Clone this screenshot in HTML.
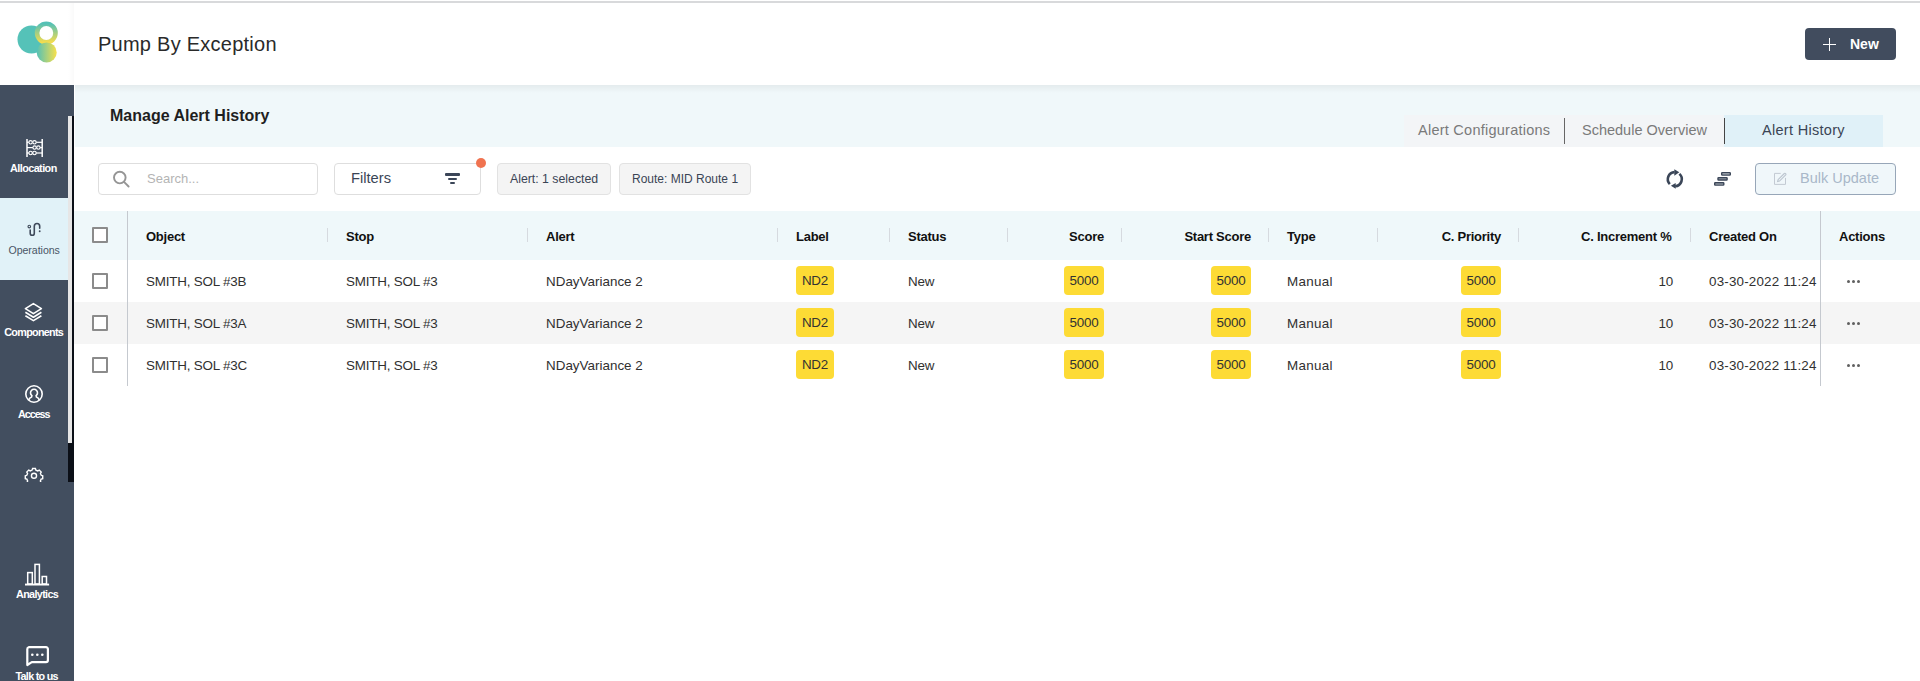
<!DOCTYPE html>
<html>
<head>
<meta charset="utf-8">
<style>
*{box-sizing:border-box;margin:0;padding:0}
html,body{width:1920px;height:681px;overflow:hidden;background:#fff;font-family:"Liberation Sans",sans-serif;position:relative}
.a{position:absolute}
.t{position:absolute;white-space:nowrap;line-height:1}
.topline{left:0;top:1px;width:1920px;height:2px;background:#d8d9db}
.logoarea{left:0;top:3px;width:74px;height:82px;background:#fff}
.logoshadow{left:68px;top:3px;width:6px;height:82px;background:linear-gradient(to right,rgba(0,0,0,0),rgba(0,0,0,0.025))}
.side{left:0;top:85px;width:74px;height:596px;background:#424e5f}
.band{left:75px;top:85px;width:1845px;height:62px;background:#f0f8fa}
.bandshadow{left:75px;top:85px;width:1845px;height:8px;background:linear-gradient(to bottom,rgba(0,0,0,0.05),rgba(0,0,0,0))}
.navw{color:#fff;font-weight:bold;font-size:10px}
.box{border:1px solid #dedede;border-radius:4px;background:#fff}
.chip{border:1px solid #e2e2e2;border-radius:4px;background:#f4f4f4}
.thead{left:74px;top:211px;width:1846px;height:49px;background:#eff8fa}
.sep{position:absolute;top:228px;width:1px;height:14px;background:#d6dadf}
.hd{position:absolute;white-space:nowrap;line-height:1;font-weight:bold;font-size:13px;color:#111;letter-spacing:-0.25px}
.cell{position:absolute;white-space:nowrap;line-height:1;font-size:13.4px;color:#303030;letter-spacing:-0.2px}
.badge{position:absolute;height:29px;background:#fddb35;border-radius:4px;font-size:13.4px;line-height:29px;text-align:center;color:#333;letter-spacing:-0.2px}
.cb{position:absolute;left:92px;width:16px;height:16px;border:2px solid #8b8b8b;border-radius:1px;background:#fff}
.row{position:absolute;left:74px;width:1846px;height:42px}
.dots{position:absolute;width:14px;height:4px}
.dots i{position:absolute;top:0.3px;width:3.2px;height:3.2px;border-radius:50%;background:#606060}
</style>
</head>
<body>
<div class="a topline"></div>
<div class="a logoshadow"></div>
<!-- logo -->
<svg class="a" style="left:0;top:0" width="74" height="85" viewBox="0 0 74 85">
  <defs>
    <linearGradient id="gring" x1="0" y1="0" x2="0" y2="1">
      <stop offset="0" stop-color="#55c1b6"/>
      <stop offset="1" stop-color="#f4dc4e"/>
    </linearGradient>
    <linearGradient id="gbot" x1="0" y1="0" x2="1" y2="0">
      <stop offset="0" stop-color="#55c1b6"/>
      <stop offset="1" stop-color="#f8e04a"/>
    </linearGradient>
  </defs>
  <circle cx="31.5" cy="39.5" r="14" fill="#55c2b8"/>
  <circle cx="46.3" cy="33" r="9.2" fill="#fff" stroke="url(#gring)" stroke-width="4.6"/>
  <circle cx="46.7" cy="52.4" r="10" fill="url(#gbot)"/>
</svg>

<div class="t" style="left:98px;top:34px;font-size:20px;color:#2a2a2a;letter-spacing:0.25px">Pump By Exception</div>

<!-- New button -->
<div class="a" style="left:1805px;top:28px;width:91px;height:32px;background:#414c5e;border-radius:4px"></div>
<div class="a" style="left:1823px;top:43.5px;width:13px;height:1.6px;background:#fff"></div>
<div class="a" style="left:1828.7px;top:38px;width:1.6px;height:12.5px;background:#fff"></div>
<div class="t" style="left:1850px;top:37px;font-size:14px;font-weight:bold;color:#fff">New</div>

<!-- sidebar -->
<div class="a side"></div>
<div class="a" style="left:0;top:198px;width:68px;height:82px;background:#e1f2f8"></div>
<!-- scrollbar -->
<div class="a" style="left:68px;top:116px;width:4px;height:327px;background:#e6e6e6"></div>
<div class="a" style="left:72px;top:116px;width:2px;height:366px;background:#0b0f17"></div>
<div class="a" style="left:68px;top:443px;width:6px;height:39px;background:#0b0f17"></div>


<!-- sidebar nav -->
<div class="a" style="left:0;top:116px;width:68px;height:366px;overflow:hidden">
<svg class="a" style="left:0;top:-116px" width="68" height="482" viewBox="0 0 68 482">
  <g fill="none" stroke="#fff" stroke-width="1.5">
    <line x1="27" y1="139" x2="27" y2="157"/>
    <line x1="42.2" y1="139" x2="42.2" y2="157"/>
    <line x1="27" y1="142.3" x2="42.2" y2="142.3" stroke-width="1.2"/>
    <line x1="27" y1="147.6" x2="42.2" y2="147.6" stroke-width="1.2"/>
    <line x1="27" y1="153" x2="42.2" y2="153" stroke-width="1.2"/>
  </g>
  <g fill="#424e5f" stroke="#fff" stroke-width="1.1">
    <circle cx="30.6" cy="142.3" r="1.7"/><circle cx="34.5" cy="142.3" r="1.7"/>
    <circle cx="34.6" cy="147.6" r="1.7"/><circle cx="38.4" cy="147.6" r="1.7"/>
    <circle cx="30.6" cy="153" r="1.7"/><circle cx="34.5" cy="153" r="1.7"/>
  </g>
  <!-- operations icon -->
  <g fill="none" stroke="#3f4a5b" stroke-width="1.7" stroke-linecap="round">
    <circle cx="29.3" cy="226.6" r="1.3" stroke-width="1.1"/>
    <path d="M30.2 230 V233.2 A2.05 2.05 0 0 0 34.3 233.2 V226.2 A2.7 2.7 0 0 1 39.7 226.2 V228.2" stroke-width="1.6"/>
  </g>
  <circle cx="39.7" cy="231.3" r="0.95" fill="#3f4a5b"/>
  <!-- components -->
  <g fill="none" stroke="#fff" stroke-width="1.6" stroke-linejoin="round">
    <path d="M33.4 303.6 L41.4 308.6 L33.4 313.6 L25.4 308.6 Z"/>
    <path d="M25.4 312.3 L33.4 317.2 L41.4 312.3"/>
    <path d="M25.4 315.8 L33.4 320.6 L41.4 315.8"/>
  </g>
  <!-- access -->
  <g fill="none" stroke="#fff" stroke-width="1.6">
    <circle cx="34" cy="394" r="8.2"/>
    <path d="M28.6 400.2 Q29.2 397.6 31.6 396.9 L31.9 395.6 A3.5 3.5 0 1 1 36.1 395.6 L36.4 396.9 Q38.8 397.6 39.4 400.2"/>
  </g>
  <!-- gear -->
  <g fill="none" stroke="#fff" stroke-width="1.6" transform="translate(34 476) scale(0.88) translate(-34 -476)">
    <circle cx="34" cy="475.7" r="2.9"/>
    <path d="M32.4 467.5 L35.6 467.5 L36.2 469.3 L38.3 470.2 L40 469.3 L42.2 471.5 L41.3 473.2 L42.2 475.2 L43.9 475.8 L43.9 479 L42.1 479.6 L41.2 481.6 L42 483.4 L39.8 485.6 L38 484.7 L36 485.6 L35.4 487.4 L32.6 487.4 L32 485.6 L30 484.7 L28.2 485.6 L26 483.4 L26.8 481.6 L25.9 479.6 L24.1 479 L24.1 475.8 L25.8 475.2 L26.7 473.2 L25.8 471.5 L28 469.3 L29.8 470.2 L31.8 469.3 Z"/>
  </g>
</svg>
</div>
<div class="t navw" style="left:10px;top:162.5px;font-size:10.8px;letter-spacing:-0.55px">Allocation</div>
<div class="t" style="left:8.5px;top:244.5px;font-size:10.6px;color:#4a5566;letter-spacing:-0.05px">Operations</div>
<div class="t navw" style="left:4.3px;top:326.5px;font-size:10.8px;letter-spacing:-0.72px">Components</div>
<div class="t navw" style="left:18px;top:408.5px;font-size:10.8px;letter-spacing:-1.05px">Access</div>
<svg class="a" style="left:0;top:540px" width="74" height="141" viewBox="0 540 74 141">
  <g fill="none" stroke="#fff" stroke-width="1.5">
    <rect x="27.7" y="572.6" width="4.6" height="11.4"/>
    <rect x="35" y="564.4" width="4.4" height="19.6"/>
    <rect x="42.2" y="576.5" width="4.3" height="7.5"/>
  </g>
  <rect x="25" y="583.6" width="24.1" height="1.9" fill="#fff"/>
  <path d="M28.7 647.2 H46 A1.9 1.9 0 0 1 47.9 649.1 V660.2 A1.9 1.9 0 0 1 46 662.1 H31.8 L27.3 665 V649.1 A1.9 1.9 0 0 1 28.7 647.2 Z" fill="none" stroke="#fff" stroke-width="2.2" stroke-linejoin="round"/>
  <circle cx="32.3" cy="654.7" r="1.3" fill="#fff"/>
  <circle cx="37.3" cy="654.7" r="1.3" fill="#fff"/>
  <circle cx="42.3" cy="654.7" r="1.3" fill="#fff"/>
</svg>
<div class="t navw" style="left:16px;top:588.5px;font-size:10.8px;letter-spacing:-0.65px">Analytics</div>
<div class="t navw" style="left:15.5px;top:670.5px;font-size:10.8px;letter-spacing:-0.72px">Talk to us</div>

<!-- band -->
<div class="a band"></div>
<div class="a bandshadow"></div>
<div class="t" style="left:110px;top:108px;font-size:16px;font-weight:bold;color:#1f1f1f">Manage Alert History</div>

<!-- tabs -->
<div class="a" style="left:1404px;top:115px;width:320px;height:32px;background:#f3f5f7"></div>
<div class="a" style="left:1724px;top:115px;width:159px;height:32px;background:#e0f1f8"></div>
<div class="a" style="left:1564px;top:118px;width:1px;height:26px;background:#666"></div>
<div class="a" style="left:1724px;top:118px;width:1px;height:26px;background:#444"></div>
<div class="t" style="left:1418px;top:123px;font-size:14.5px;color:#7a7a7a;letter-spacing:0.25px">Alert Configurations</div>
<div class="t" style="left:1582px;top:123px;font-size:14.5px;color:#7a7a7a">Schedule Overview</div>
<div class="t" style="left:1762px;top:123px;font-size:14.5px;color:#3a4454;letter-spacing:0.3px">Alert History</div>

<!-- toolbar -->
<div class="a box" style="left:98px;top:163px;width:220px;height:32px"></div>
<svg class="a" style="left:110px;top:168px" width="24" height="24" viewBox="0 0 24 24">
  <circle cx="9.8" cy="9.6" r="5.8" fill="none" stroke="#959595" stroke-width="1.9"/>
  <line x1="14" y1="13.9" x2="18.6" y2="18.5" stroke="#959595" stroke-width="1.9" stroke-linecap="round"/>
</svg>
<div class="t" style="left:147px;top:172px;font-size:13px;color:#b4b4b4">Search...</div>

<div class="a box" style="left:334px;top:163px;width:147px;height:32px"></div>
<div class="t" style="left:351px;top:171px;font-size:14.7px;color:#3a4556">Filters</div>
<div class="a" style="left:445px;top:173px;width:15px;height:2.5px;background:#3b4658;border-radius:1px"></div>
<div class="a" style="left:447.5px;top:177.6px;width:9.8px;height:2.4px;background:#3b4658;border-radius:1px"></div>
<div class="a" style="left:450px;top:181.9px;width:5px;height:2.3px;background:#3b4658;border-radius:1px"></div>
<div class="a" style="left:476px;top:158px;width:10px;height:10px;border-radius:50%;background:#f07350"></div>

<div class="a chip" style="left:497px;top:163px;width:114px;height:32px"></div>
<div class="t" style="left:510px;top:173px;font-size:12.3px;color:#3a4454">Alert: 1 selected</div>
<div class="a chip" style="left:619px;top:163px;width:132px;height:32px"></div>
<div class="t" style="left:632px;top:173px;font-size:12px;color:#3a4454">Route: MID Route 1</div>

<!-- refresh icon -->
<svg class="a" style="left:1663px;top:167px" width="24" height="24" viewBox="0 0 24 24">
  <path d="M11.6 5.1 A7.1 7.1 0 0 0 6.8 17.1" fill="none" stroke="#3b4658" stroke-width="2.6"/>
  <path d="M16.4 6.9 A7.1 7.1 0 0 1 12.2 19.3" fill="none" stroke="#3b4658" stroke-width="2.6"/>
  <path d="M11.3 2.2 L16.3 5.2 L11.3 8.8 Z" fill="#3b4658"/>
  <path d="M12.7 16.1 L7.9 18.8 L12.7 21.8 Z" fill="#3b4658"/>
</svg>
<!-- bars icon -->
<svg class="a" style="left:1712px;top:171px" width="22" height="17" viewBox="0 0 22 17">
  <g fill="#b0b6bd" stroke="#3b4658" stroke-width="1.4">
  <rect x="9.7" y="1.6" width="8.6" height="2.5" rx="0.6"/>
  <rect x="6" y="6.7" width="9.1" height="2.3" rx="0.6"/>
  <rect x="2.7" y="11.7" width="9.1" height="2.4" rx="0.6"/>
  </g>
</svg>
<!-- bulk update -->
<div class="a" style="left:1755px;top:163px;width:141px;height:32px;border:1.3px solid #97a6b8;border-radius:4px;background:#f0f7fa"></div>
<svg class="a" style="left:1772px;top:171px" width="16" height="16" viewBox="0 0 16 16">
  <path d="M8.7 2.4 H2.5 V13.4 H13.5 V6.9" fill="none" stroke="#c3cad3" stroke-width="1"/>
  <path d="M6.1 8.7 L12.3 2.5 A1 1 0 0 1 13.7 3.9 L7.5 10.1 L5.6 10.6 Z" fill="none" stroke="#bcc5cf" stroke-width="1.1"/>
</svg>
<div class="t" style="left:1800px;top:171px;font-size:14.5px;color:#a9b8c9">Bulk Update</div>

<!-- table header -->
<div class="a thead"></div>
<div class="a" style="left:127px;top:211px;width:1px;height:175px;background:#c5c9cf"></div>
<div class="a" style="left:1820px;top:211px;width:1px;height:175px;background:#c5c9cf"></div>
<div class="cb" style="top:227px"></div>
<div class="sep" style="left:327px"></div>
<div class="sep" style="left:527px"></div>
<div class="sep" style="left:777px"></div>
<div class="sep" style="left:889px"></div>
<div class="sep" style="left:1007px"></div>
<div class="sep" style="left:1121px"></div>
<div class="sep" style="left:1268px"></div>
<div class="sep" style="left:1377px"></div>
<div class="sep" style="left:1518px"></div>
<div class="sep" style="left:1690px"></div>

<div class="hd" style="left:146px;top:230px">Object</div>
<div class="hd" style="left:346px;top:230px">Stop</div>
<div class="hd" style="left:546px;top:230px">Alert</div>
<div class="hd" style="left:796px;top:230px">Label</div>
<div class="hd" style="left:908px;top:230px">Status</div>
<div class="hd" style="left:1004px;top:230px;width:100px;text-align:right">Score</div>
<div class="hd" style="left:1151px;top:230px;width:100px;text-align:right">Start Score</div>
<div class="hd" style="left:1287px;top:230px">Type</div>
<div class="hd" style="left:1401px;top:230px;width:100px;text-align:right">C. Priority</div>
<div class="hd" style="left:1551.5px;top:230px;width:120px;text-align:right">C. Increment %</div>
<div class="hd" style="left:1709px;top:230px">Created On</div>
<div class="hd" style="left:1839px;top:230px">Actions</div>

<!-- rows -->
<div class="row" style="top:260px;background:#fff"></div>
<div class="row" style="top:302px;background:#f5f5f5"></div>
<div class="row" style="top:344px;background:#fff"></div>
<div class="a" style="left:127px;top:211px;width:1px;height:175px;background:#c5c9cf"></div>
<div class="a" style="left:1820px;top:211px;width:1px;height:175px;background:#c5c9cf"></div>
<div class="cb" style="top:273px"></div>
<div class="cell" style="left:146px;top:274.6px">SMITH, SOL #3B</div>
<div class="cell" style="left:346px;top:274.6px">SMITH, SOL #3</div>
<div class="cell" style="left:546px;top:274.6px;letter-spacing:0.02px">NDayVariance 2</div>
<div class="badge" style="left:796px;top:266px;width:38px">ND2</div>
<div class="cell" style="left:908px;top:274.6px">New</div>
<div class="badge" style="left:1064px;top:266px;width:40px">5000</div>
<div class="badge" style="left:1211px;top:266px;width:40px">5000</div>
<div class="cell" style="left:1287px;top:274.6px;letter-spacing:0.3px">Manual</div>
<div class="badge" style="left:1461px;top:266px;width:40px">5000</div>
<div class="cell" style="left:1573px;top:274.6px;width:100px;text-align:right">10</div>
<div class="cell" style="left:1709px;top:274.6px;letter-spacing:0.18px">03-30-2022 11:24</div>
<div class="dots" style="left:1847px;top:280px"><i style="left:0"></i><i style="left:5px"></i><i style="left:10px"></i></div>
<div class="cb" style="top:315px"></div>
<div class="cell" style="left:146px;top:316.6px">SMITH, SOL #3A</div>
<div class="cell" style="left:346px;top:316.6px">SMITH, SOL #3</div>
<div class="cell" style="left:546px;top:316.6px;letter-spacing:0.02px">NDayVariance 2</div>
<div class="badge" style="left:796px;top:308px;width:38px">ND2</div>
<div class="cell" style="left:908px;top:316.6px">New</div>
<div class="badge" style="left:1064px;top:308px;width:40px">5000</div>
<div class="badge" style="left:1211px;top:308px;width:40px">5000</div>
<div class="cell" style="left:1287px;top:316.6px;letter-spacing:0.3px">Manual</div>
<div class="badge" style="left:1461px;top:308px;width:40px">5000</div>
<div class="cell" style="left:1573px;top:316.6px;width:100px;text-align:right">10</div>
<div class="cell" style="left:1709px;top:316.6px;letter-spacing:0.18px">03-30-2022 11:24</div>
<div class="dots" style="left:1847px;top:322px"><i style="left:0"></i><i style="left:5px"></i><i style="left:10px"></i></div>
<div class="cb" style="top:357px"></div>
<div class="cell" style="left:146px;top:358.6px">SMITH, SOL #3C</div>
<div class="cell" style="left:346px;top:358.6px">SMITH, SOL #3</div>
<div class="cell" style="left:546px;top:358.6px;letter-spacing:0.02px">NDayVariance 2</div>
<div class="badge" style="left:796px;top:350px;width:38px">ND2</div>
<div class="cell" style="left:908px;top:358.6px">New</div>
<div class="badge" style="left:1064px;top:350px;width:40px">5000</div>
<div class="badge" style="left:1211px;top:350px;width:40px">5000</div>
<div class="cell" style="left:1287px;top:358.6px;letter-spacing:0.3px">Manual</div>
<div class="badge" style="left:1461px;top:350px;width:40px">5000</div>
<div class="cell" style="left:1573px;top:358.6px;width:100px;text-align:right">10</div>
<div class="cell" style="left:1709px;top:358.6px;letter-spacing:0.18px">03-30-2022 11:24</div>
<div class="dots" style="left:1847px;top:364px"><i style="left:0"></i><i style="left:5px"></i><i style="left:10px"></i></div>
</body>
</html>
